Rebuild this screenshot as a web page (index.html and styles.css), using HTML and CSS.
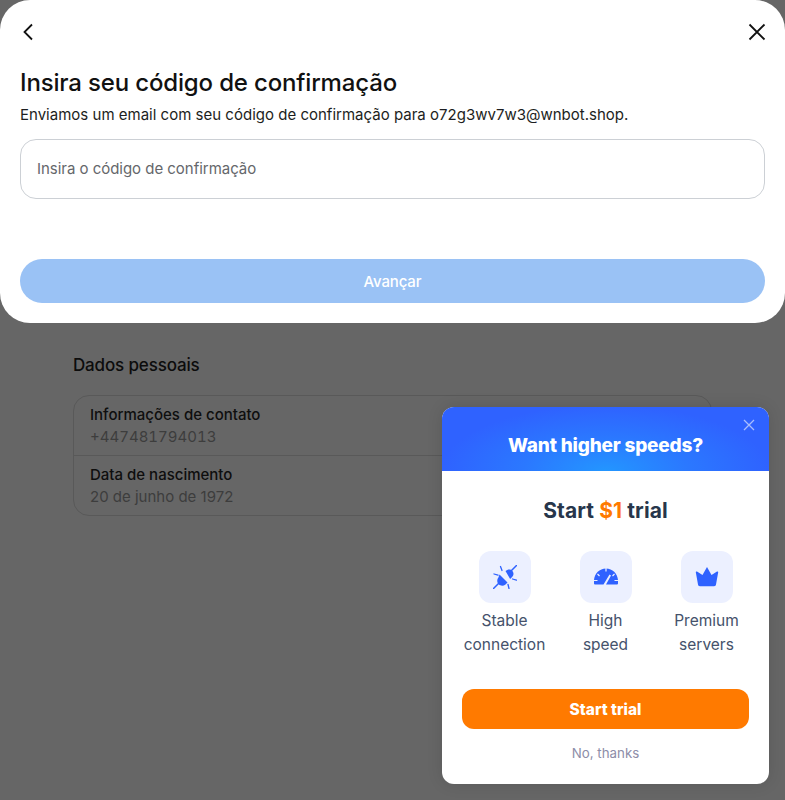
FILE: index.html
```html
<!DOCTYPE html>
<html lang="pt">
<head>
<meta charset="utf-8">
<title>Confirmação</title>
<link rel="stylesheet" href="styles.css">
</head>
<body>
<section class="sheet">
  <div class="sheet-nav">
    <svg class="nav-icon" viewBox="0 0 24 24" aria-hidden="true"><path d="M14 4.500 6.500 12l7.500 7.500"/></svg>
    <svg class="nav-icon" viewBox="0 0 24 24" aria-hidden="true"><path d="M4.500 4.500 19.500 19.500M19.500 4.500 4.500 19.500"/></svg>
  </div>
  <h1 class="sheet-title">Insira seu código de confirmação</h1>
  <p class="sheet-sub">Enviamos um email com seu código de confirmação para o72g3wv7w3@wnbot.shop.</p>
  <div class="code-field">Insira o código de confirmação</div>
  <div class="next-btn">Avançar</div>
</section>

<main class="page">
  <h2 class="page-title">Dados pessoais</h2>
  <div class="info-card">
    <div class="info-row">
      <div class="info-label">Informações de contato</div>
      <div class="info-value info-phone">+447481794013</div>
    </div>
    <div class="info-row">
      <div class="info-label">Data de nascimento</div>
      <div class="info-value">20 de junho de 1972</div>
    </div>
  </div>
</main>

<aside class="promo">
  <header class="promo-head">
    <span class="promo-title">Want higher speeds?</span>
    <svg class="promo-close" viewBox="0 0 12 12" aria-hidden="true"><path d="M1 1 11 11M11 1 1 11"/></svg>
  </header>
  <div class="promo-body">
    <div class="promo-offer">Start <span class="promo-price">$1</span> trial</div>
    <div class="features">
      <div class="feature">
        <div class="feature-icon">
          <svg viewBox="0 0 24 24" aria-hidden="true">
            <path class="ic-line" d="M.500 23.500 5.500 18.500M18.500 5.500 23.500 .500"/>
            <path class="ic-fill" d="M12.500 6c2.200-2.200 5.500-2 7 0 1.500 2 1.300 4.300-.4 6l-2 2zM6.500 9.500l8 8-2 2c-2.200 1.800-5 1.600-6.800-.2-1.800-1.800-2-4.600-.3-6.800z"/>
            <path class="ic-cut" d="M4 4.500 20 20"/>
            <path class="ic-thin" d="M7.500 1.500 9 5.500M1 9l4 1.200M15 19.500l1 4M19.500 14l4 1.200"/>
          </svg>
        </div>
        <div class="feature-label">Stable<br>connection</div>
      </div>
      <div class="feature">
        <div class="feature-icon">
          <svg viewBox="0 0 24 24" aria-hidden="true">
            <path class="ic-fill" d="M12 3.500C5.500 3.500 .5 8.500 0 15v3.500a1 1 0 0 0 1 1h8.500l6-10 1.500 1-5 9h11a1 1 0 0 0 1-1V15C23.500 8.500 18.500 3.500 12 3.500z"/>
            <path class="ic-gap" d="M12 3v3.500M3.500 9 5.500 11M20.500 9 18.500 11M0 15.500h3.500M20.500 15.500H24"/>
          </svg>
        </div>
        <div class="feature-label">High<br>speed</div>
      </div>
      <div class="feature">
        <div class="feature-icon">
          <svg viewBox="0 0 24 24" aria-hidden="true">
            <path class="ic-fill" d="M12 2 16.500 10 22 6.500c.6-.3 1.300.1 1.200.8L21 19.500c-.1 1-.9 1.700-1.900 1.700H4.900c-1 0-1.800-.7-1.900-1.700L.8 7.300c-.1-.7.6-1.100 1.200-.8L7.500 10z"/>
          </svg>
        </div>
        <div class="feature-label">Premium<br>servers</div>
      </div>
    </div>
    <div class="trial-btn">Start trial</div>
    <div class="no-thanks">No, thanks</div>
  </div>
</aside>
</body>
</html>
```
FILE: styles.css
```css
* { box-sizing: border-box; }
html, body { margin: 0; padding: 0; }
body {
  height: 800px;
  overflow: hidden;
  background: #666666;
  font-family: Inter, "Liberation Sans", sans-serif;
  color: #111;
  position: relative;
}
.sheet {
  height: 323px;
  background: #fff;
  border-radius: 30px;
  padding: 20px 20px 20px;
  display: flex;
  flex-direction: column;
}
.sheet-nav { display: flex; justify-content: space-between; height: 24px; }
.nav-icon { width: 24px; height: 24px; fill: none; stroke: #111; stroke-width: 1.800; }
.nav-icon:first-child { margin-left: -2px; }
.nav-icon:last-child { margin-right: -4px; }
.sheet-title {
  margin: 24px 0 0;
  font-size: 24px;
  line-height: 30px;
  font-weight: 500;
  letter-spacing: -.16px;
  color: #111;
}
.sheet-sub {
  margin: 7px 0 0;
  font-size: 15px;
  line-height: 20px;
  letter-spacing: .01px;
  color: #1c1e21;
}
.code-field {
  margin-top: 14px;
  height: 60px;
  border: 1px solid #ccd0d5;
  border-radius: 16px;
  padding: 0 16px 2px;
  display: flex;
  align-items: center;
  font-size: 15px;
  letter-spacing: -.03px;
  color: #65676b;
}
.next-btn {
  margin-top: 60px;
  height: 44px;
  border-radius: 22px;
  background: #9ac2f5;
  color: #fff;
  font-size: 15px;
  font-weight: 500;
  letter-spacing: -.15px;
  display: flex;
  align-items: center;
  justify-content: center;
}
.page { padding: 31px 73px 0; }
.page-title {
  margin: 0;
  font-size: 17px;
  line-height: 22px;
  font-weight: 500;
  letter-spacing: -.15px;
  color: #0c0c0c;
}
.info-card {
  margin-top: 19px;
  height: 121px;
  border: 1px solid #595959;
  border-radius: 16px;
}
.info-row {
  height: 59px;
  padding: 8px 16px 0;
  font-size: 15px;
  line-height: 22px;
}
.info-row + .info-row { height: 60px; border-top: 1px solid #595959; }
.info-label { font-weight: 500; font-size: 15px; color: #0e0e0e; }
.info-value { color: #3d3d3d; font-size: 15px; }
.info-phone { font-variant-numeric: tabular-nums; }
.promo {
  position: absolute;
  left: 442px;
  top: 407px;
  width: 327px;
  height: 377px;
  background: #fff;
  border-radius: 12px;
  overflow: hidden;
  box-shadow: 0 0 16px rgba(0, 0, 0, .12);
}
.promo-head {
  position: relative;
  height: 64px;
  padding-top: 27px;
  background: radial-gradient(ellipse 165px 66px at 50% 100%, #2396ff 0%, #2b78ff 50%, #2f62ff 100%);
  text-align: center;
}
.promo-title { font-size: 19px; line-height: 24px; font-weight: 800; letter-spacing: -.2px; color: #fff; display: block; }
.promo-close {
  position: absolute;
  top: 12px;
  right: 14px;
  width: 12px;
  height: 12px;
  fill: none;
  stroke: #a9bdfd;
  stroke-width: 1.300;
}
.promo-body { padding: 26px 20px 0; }
.promo-offer {
  text-align: center;
  font-size: 21px;
  line-height: 28px;
  font-weight: 700;
  letter-spacing: .1px;
  color: #27364b;
}
.promo-price { color: #ff7a00; }
.features { margin: 26px -8px 0; display: flex; justify-content: center; }
.feature { width: 101px; display: flex; flex-direction: column; align-items: center; }
.feature-icon {
  width: 52px;
  height: 52px;
  border-radius: 12px;
  background: #ecf0ff;
  display: flex;
  align-items: center;
  justify-content: center;
}
.feature-icon svg { width: 24px; height: 24px; }
.ic-fill { fill: #2f62ff; }
.ic-line { fill: none; stroke: #2f62ff; stroke-width: 1.500; stroke-linecap: round; }
.ic-thin { fill: none; stroke: #2f62ff; stroke-width: 1.300; stroke-linecap: round; }
.ic-cut { fill: none; stroke: #ecf0ff; stroke-width: 1.500; }
.ic-gap { fill: none; stroke: #ecf0ff; stroke-width: 1.200; }
.feature-label {
  margin-top: 6px;
  text-align: center;
  font-size: 15.500px;
  line-height: 24px;
  color: #45526b;
  white-space: nowrap;
}
.trial-btn {
  margin-top: 32px;
  height: 40px;
  border-radius: 12px;
  background: #ff7a00;
  color: #fff;
  font-size: 15.500px;
  font-weight: 800;
  display: flex;
  align-items: center;
  justify-content: center;
}
.no-thanks {
  margin-top: 14px;
  text-align: center;
  font-size: 13.300px;
  line-height: 20px;
  color: #8d8da8;
}
```
